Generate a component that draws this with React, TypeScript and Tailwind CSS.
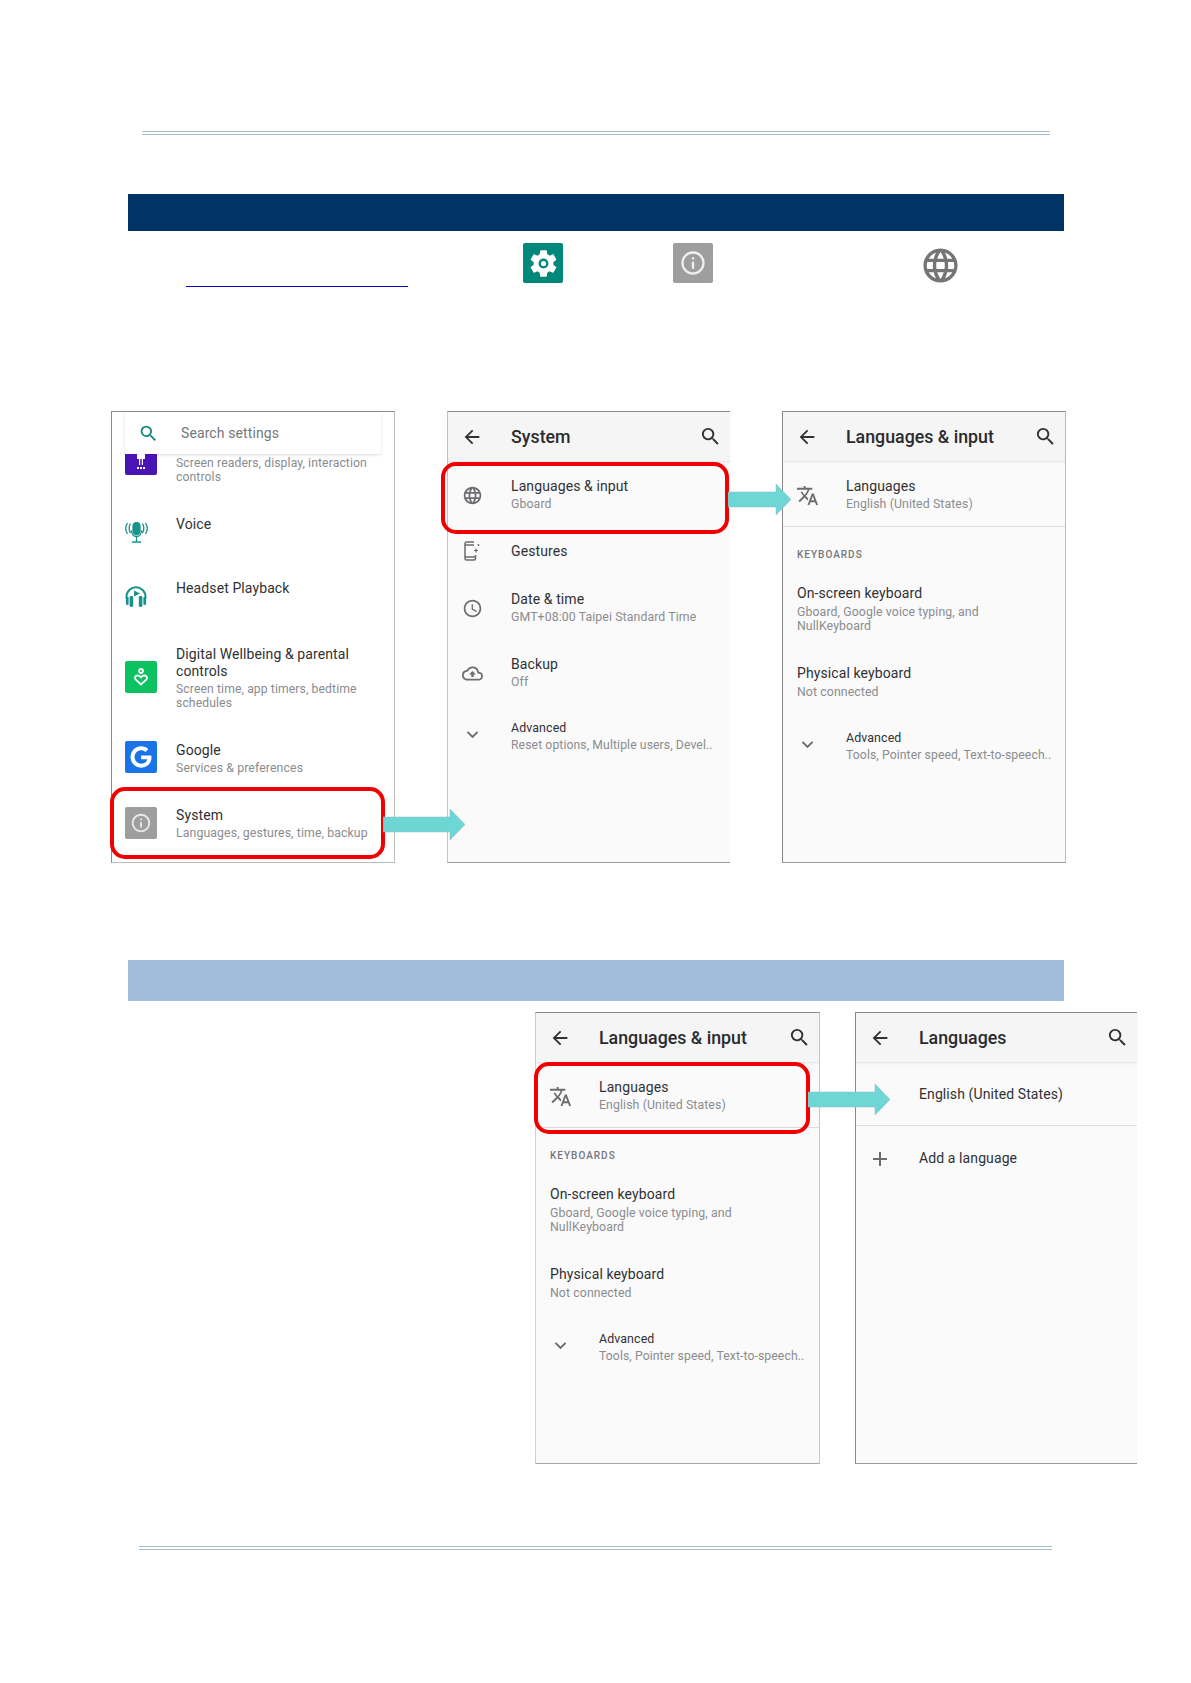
import type { ReactNode } from "react";
import { FaGoogle } from "react-icons/fa";
import {
  MdAccessTime,
  MdAdd,
  MdArrowBack,
  MdExpandMore,
  MdInfoOutline,
  MdLanguage,
  MdOutlineBackup,
  MdSearch,
  MdTranslate,
} from "react-icons/md";

const font = "font-['Roboto',sans-serif]";

function DoubleRule({ className }: { className: string }) {
  return <div className={`h-[4px] border-y border-[#a3bdcf] ${className}`} />;
}

function Arrow({ width, className }: { width: number; className: string }) {
  const head = width - 15;
  return (
    <svg
      className={`absolute z-10 ${className}`}
      width={width}
      height={31}
      viewBox={`0 0 ${width} 31`}
    >
      <path
        d={`M0 8H${head}V0L${width} 15.5L${head} 31V23H0Z`}
        fill="#6fd6d6"
        stroke="#8fb8c8"
        strokeWidth="0.5"
      />
    </svg>
  );
}

function Ring({ className }: { className: string }) {
  return (
    <div
      className={`absolute z-10 h-[72px] rounded-[15px] border-[4px] border-[#f00000] ${className}`}
    />
  );
}

function Title({ children }: { children: ReactNode }) {
  return (
    <div className="text-[14px] leading-[19px] tracking-[0.1px] text-[#303134]">
      {children}
    </div>
  );
}

function Sub({ children }: { children: ReactNode }) {
  return (
    <div className="whitespace-nowrap text-[12.3px] leading-[17px] tracking-[0.1px] text-[#8a8c8f]">
      {children}
    </div>
  );
}

function Header({ title }: { title: string }) {
  return (
    <div className="flex h-[50px] items-center justify-between border-b border-[#e8e8e8] bg-[#f5f5f5] pr-[8px] shadow-[0_1px_2px_rgba(0,0,0,0.05)]">
      <div className="flex items-center">
        <div className="flex w-[48px] justify-center">
          <MdArrowBack size={22} color="#303134" />
        </div>
        <div className="ml-[15px] text-[17.8px] font-medium leading-[24px] text-[#2a2b2d]">
          {title}
        </div>
      </div>
      <MdSearch size={23} color="#303134" />
    </div>
  );
}

function SettingRow({
  icon,
  height,
  children,
}: {
  icon?: ReactNode;
  height: string;
  children: ReactNode;
}) {
  return (
    <div className={`flex items-center ${height}`}>
      <div className="flex w-[48px] justify-center text-[#6b6d70]">{icon}</div>
      <div className="ml-[15px]">{children}</div>
    </div>
  );
}

function AdvancedRow({ detail, height }: { detail: string; height: string }) {
  return (
    <SettingRow icon={<MdExpandMore size={23} className="mb-[4px]" />} height={height}>
      <div className="mb-[2px] text-[12.4px] leading-[15px] tracking-[0.1px] text-[#303134]">
        Advanced
      </div>
      <div className="whitespace-nowrap text-[12.2px] leading-[17px] tracking-[0.1px] text-[#8a8c8f]">
        {detail}
      </div>
    </SettingRow>
  );
}

function LanguagesInputBody() {
  return (
    <>
      <div className="border-b border-[#dcdcdc] pt-[2px]">
        <SettingRow icon={<MdTranslate size={23} />} height="h-[62px]">
          <Title>Languages</Title>
          <Sub>English (United States)</Sub>
        </SettingRow>
      </div>
      <div className="flex h-[54px] items-center pl-[14px] text-[10px] font-medium tracking-[1px] text-[#74777a]">
        KEYBOARDS
      </div>
      <div className="flex h-[55px] flex-col justify-center pl-[14px]">
        <Title>On-screen keyboard</Title>
        <div className="mt-[2px] text-[12.3px] leading-[14px] tracking-[0.1px] text-[#8a8c8f]">
          Gboard, Google voice typing, and
          <br />
          NullKeyboard
        </div>
      </div>
      <div className="mt-[13px] flex h-[66px] flex-col justify-center pl-[14px]">
        <Title>Physical keyboard</Title>
        <div className="mt-px whitespace-nowrap text-[12.3px] leading-[17px] tracking-[0.1px] text-[#8a8c8f]">
          Not connected
        </div>
      </div>
      <AdvancedRow
        detail="Tools, Pointer speed, Text-to-speech.."
        height="h-[63px]"
      />
    </>
  );
}

function GearIcon() {
  return (
    <svg width="33" height="33" viewBox="0 0 24 24" fill="#fff">
      <path d="M19.14 12.94c.04-.3.06-.61.06-.94 0-.32-.02-.64-.07-.94l2.03-1.58c.18-.14.23-.41.12-.61l-1.92-3.32c-.12-.22-.37-.29-.59-.22l-2.39.96c-.5-.38-1.03-.7-1.62-.94l-.36-2.54c-.04-.24-.24-.41-.48-.41h-3.84c-.24 0-.43.17-.47.41l-.36 2.54c-.59.24-1.13.57-1.62.94l-2.39-.96c-.22-.08-.47 0-.59.22L2.74 8.87c-.12.21-.08.47.12.61l2.03 1.58c-.05.3-.09.63-.09.94s.02.64.07.94l-2.03 1.58c-.18.14-.23.41-.12.61l1.92 3.32c.12.22.37.29.59.22l2.39-.96c.5.38 1.03.7 1.62.94l.36 2.54c.05.24.24.41.48.41h3.84c.24 0 .44-.17.47-.41l.36-2.54c.59-.24 1.13-.56 1.62-.94l2.39.96c.22.08.47 0 .59-.22l1.92-3.32c.12-.22.07-.47-.12-.61l-2.01-1.58zM12 15.6c-1.98 0-3.6-1.62-3.6-3.6s1.62-3.6 3.6-3.6 3.6 1.62 3.6 3.6-1.62 3.6-3.6 3.6z" />
      <circle cx="12" cy="12" r="1.9" />
    </svg>
  );
}

function GesturesIcon() {
  return (
    <svg width="18" height="20" viewBox="0 0 18 20" fill="none" stroke="#6b6d70" strokeWidth="1.5">
      <path d="M11 1H3.5C2.7 1 2 1.7 2 2.5V17.5C2 18.3 2.7 19 3.5 19H11C11.8 19 12.5 18.3 12.5 17.5V14" />
      <path d="M2 4H11M2 16H12.5" />
      <path d="M13 7.5V11.5M11 9.5H15" strokeWidth="1.2" />
      <path d="M15.5 3V5M14.5 4H16.5" strokeWidth="0.9" />
    </svg>
  );
}

function VoiceIcon() {
  return (
    <svg width="23" height="21" viewBox="0 0 23 21" fill="none" stroke="#16938c" strokeWidth="1.3">
      <rect x="8" y="0.5" width="7" height="12" rx="3.5" fill="#16938c" />
      <path d="M6.5 8.5C6.5 12 8.5 14.5 11.5 14.5C14.5 14.5 16.5 12 16.5 8.5" />
      <path d="M11.5 14.5V19.5M7 20H16" />
      <path d="M5.5 1.5C3.8 4.5 3.8 8 5.5 11M17.5 1.5C19.2 4.5 19.2 8 17.5 11" />
      <path d="M2.5 1C0.2 4.5 0.2 8.5 2.5 12M20.5 1C22.8 4.5 22.8 8.5 20.5 12" />
    </svg>
  );
}

function HeadsetIcon() {
  return (
    <svg width="22" height="21" viewBox="0 0 22 21" fill="none">
      <path d="M1.5 13V11C1.5 5.2 5.8 1.2 11 1.2C16.2 1.2 20.5 5.2 20.5 11V13" stroke="#16938c" strokeWidth="2" />
      <rect x="1" y="11" width="2.6" height="8" rx="1.2" fill="#16938c" />
      <rect x="4.6" y="10" width="3.6" height="11" rx="1.4" fill="#16938c" />
      <rect x="13.8" y="10" width="3.6" height="11" rx="1.4" fill="#16938c" />
      <rect x="18.4" y="11" width="2.6" height="8" rx="1.2" fill="#16938c" />
      <path d="M9 4.5L15 7.5L9 10.5Z" fill="#16938c" />
    </svg>
  );
}

function WellbeingIcon() {
  return (
    <div className="flex h-[32px] w-[32px] items-center justify-center rounded-[2px] bg-[#0cc160]">
      <svg width="14" height="18" viewBox="0 0 14 18" fill="none" stroke="#fff" strokeWidth="1.8">
        <circle cx="7" cy="3" r="2" />
        <path d="M7 16.5L1.8 11.6C0.2 10 1.2 7.5 3.5 7.5C5 7.5 6.2 8.2 7 9.2C7.8 8.2 9 7.5 10.5 7.5C12.8 7.5 13.8 10 12.2 11.6Z" />
      </svg>
    </div>
  );
}

function AccessibilityIcon() {
  return (
    <div className="flex h-[21px] w-[32px] justify-center rounded-b-[2px] bg-[#4a14b4]">
      <svg width="10" height="17" viewBox="0 0 10 17" fill="#fff">
        <path d="M1 0H9V5H7V11H5.8V5H4.2V11H3V5H1Z" />
        <rect x="1" y="13" width="2" height="2" />
        <rect x="4" y="13" width="2" height="2" />
        <rect x="7" y="13" width="2" height="2" />
      </svg>
    </div>
  );
}

function MenuRow({
  icon,
  iconTop,
  textTop,
  height,
  children,
}: {
  icon: ReactNode;
  iconTop: string;
  textTop: string;
  height: string;
  children: ReactNode;
}) {
  return (
    <div className={`flex ${height}`}>
      <div className={`ml-[13px] w-[51px] shrink-0 ${iconTop}`}>{icon}</div>
      <div className={textTop}>{children}</div>
    </div>
  );
}

function SettingsPhone() {
  return (
    <div className="relative h-[452px] w-[284px] border border-t-[#8a8a8a] border-r-[#bdbdbd] border-b-[#bdbdbd] border-l-[#8a8a8a] bg-white">
      <div className="ml-[13px] flex h-[42px] w-[256px] items-center rounded-b-[2px] bg-white shadow-[0_1px_3px_rgba(0,0,0,0.14)]">
        <MdSearch size={21} color="#12877d" className="ml-[13px]" />
        <span className="ml-[22px] text-[14px] tracking-[0.1px] text-[#74777a]">
          Search settings
        </span>
      </div>
      <MenuRow icon={<AccessibilityIcon />} iconTop="" textTop="pt-[2px]" height="h-[38px]">
        <div className="text-[12.2px] leading-[14px] tracking-[0.1px] text-[#8a8c8f]">
          Screen readers, display, interaction
          <br />
          controls
        </div>
      </MenuRow>
      <MenuRow icon={<VoiceIcon />} iconTop="pt-[30px]" textTop="pt-[23px]" height="h-[65px]">
        <Title>Voice</Title>
      </MenuRow>
      <MenuRow icon={<HeadsetIcon />} iconTop="pt-[29px]" textTop="pt-[22px]" height="h-[65px]">
        <Title>Headset Playback</Title>
      </MenuRow>
      <MenuRow icon={<WellbeingIcon />} iconTop="pt-[39px]" textTop="pt-[24px]" height="h-[103px]">
        <div className="text-[14px] leading-[17px] tracking-[0.1px] text-[#303134]">
          Digital Wellbeing &amp; parental
          <br />
          controls
        </div>
        <div className="mt-[2px] text-[12.2px] leading-[14px] tracking-[0.1px] text-[#8a8c8f]">
          Screen time, app timers, bedtime
          <br />
          schedules
        </div>
      </MenuRow>
      <MenuRow
        icon={
          <div className="flex h-[32px] w-[32px] items-center justify-center rounded-[2px] bg-[#1a73e8]">
            <FaGoogle size={22} color="#fff" />
          </div>
        }
        iconTop="pt-[16px]"
        textTop="pt-[16px]"
        height="h-[66px]"
      >
        <Title>Google</Title>
        <Sub>Services &amp; preferences</Sub>
      </MenuRow>
      <MenuRow
        icon={
          <div className="flex h-[32px] w-[32px] items-center justify-center rounded-[2px] bg-[#9e9e9e]">
            <MdInfoOutline size={22} color="#e8e8e8" />
          </div>
        }
        iconTop="pt-[16px]"
        textTop="pt-[15px]"
        height="h-[71px]"
      >
        <Title>System</Title>
        <Sub>Languages, gestures, time, backup</Sub>
      </MenuRow>
      <Ring className="left-[-2px] top-[375px] w-[275px]" />
      <Arrow width={82} className="left-[271px] top-[397px]" />
    </div>
  );
}

function SystemPhone() {
  return (
    <div className="relative h-[452px] w-[283px] border-y border-l border-t-[#8a8a8a] border-b-[#9a9a9a] border-l-[#c4c4c4] bg-[#fafafa]">
      <Header title="System" />
      <SettingRow icon={<MdLanguage size={21} />} height="h-[66px]">
        <Title>Languages &amp; input</Title>
        <Sub>Gboard</Sub>
      </SettingRow>
      <SettingRow icon={<GesturesIcon />} height="h-[46px]">
        <Title>Gestures</Title>
      </SettingRow>
      <SettingRow icon={<MdAccessTime size={21} />} height="h-[68px]">
        <Title>Date &amp; time</Title>
        <Sub>GMT+08:00 Taipei Standard Time</Sub>
      </SettingRow>
      <SettingRow icon={<MdOutlineBackup size={21} />} height="h-[62px]">
        <Title>Backup</Title>
        <Sub>Off</Sub>
      </SettingRow>
      <AdvancedRow detail="Reset options, Multiple users, Devel.." height="h-[65px]" />
      <Ring className="left-[-7px] top-[50px] w-[288px]" />
      <Arrow width={63} className="left-[280px] top-[72px]" />
    </div>
  );
}

function LanguagesInputPhone() {
  return (
    <div className="h-[452px] w-[284px] border border-t-[#8a8a8a] border-r-[#bdbdbd] border-b-[#9a9a9a] border-l-[#8a8a8a] bg-[#fafafa]">
      <Header title="Languages & input" />
      <LanguagesInputBody />
    </div>
  );
}

export default function App() {
  return (
    <div className={`h-[1683px] w-[1191px] bg-white pt-[131px] ${font}`}>
      <DoubleRule className="ml-[142px] w-[908px]" />

      <div className="ml-[128px] mt-[59px] h-[37px] w-[936px] bg-[#003366]" />

      {/* Icon line: its words are blank in the picture */}
      <div className="flex h-[180px] items-start pl-[186px]">
        <div className="mt-[55px] h-[1px] w-[222px] bg-[#0000c0]" />
        <div className="ml-[115px] mt-[12px] flex h-[40px] w-[40px] items-center justify-center rounded-[2px] bg-[#00897b]">
          <GearIcon />
        </div>
        <div className="ml-[110px] mt-[12px] flex h-[40px] w-[40px] items-center justify-center rounded-[2px] bg-[#9e9e9e]">
          <MdInfoOutline size={28} color="#f0f0f0" />
        </div>
        <div className="ml-[207px] mt-[14px]">
          <MdLanguage size={41} color="#757575" />
        </div>
      </div>

      <div className="flex gap-[52px] pl-[111px]">
        <SettingsPhone />
        <SystemPhone />
        <LanguagesInputPhone />
      </div>

      <div className="ml-[128px] mt-[97px] h-[41px] w-[936px] bg-[#a1bddb]" />

      <div className="mt-[11px] flex gap-[35px] pl-[535px]">
        <div className="relative h-[452px] w-[285px] border border-t-[#8a8a8a] border-r-[#c8c8c8] border-b-[#a8a8a8] border-l-[#d0d0d0] bg-[#fafafa]">
          <Header title="Languages & input" />
          <LanguagesInputBody />
          <Ring className="left-[-2px] top-[49px] w-[276px]" />
          <Arrow width={82} className="left-[272px] top-[71px]" />
        </div>
        <div className="h-[452px] w-[282px] border-y border-l border-t-[#8a8a8a] border-b-[#9a9a9a] border-l-[#8a8a8a] bg-[#fafafa]">
          <Header title="Languages" />
          <div className="flex h-[63px] items-center border-b border-[#dcdcdc] pl-[63px] pt-[1px]">
            <span className="text-[14px] tracking-[0.1px] text-[#303134]">
              English (United States)
            </span>
          </div>
          <SettingRow icon={<MdAdd size={24} />} height="h-[65px]">
            <Title>Add a language</Title>
          </SettingRow>
        </div>
      </div>

      <DoubleRule className="ml-[139px] mt-[82px] w-[913px]" />
    </div>
  );
}
